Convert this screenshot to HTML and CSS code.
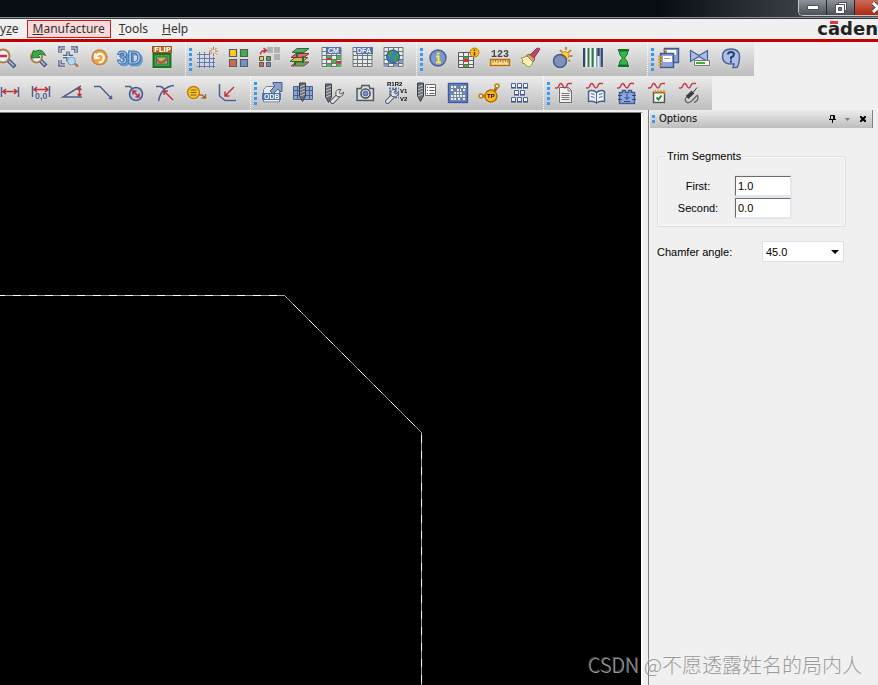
FILE: index.html
```html
<!DOCTYPE html>
<html lang="en">
<head>
    <meta charset="UTF-8">
    <meta name="viewport" content="width=device-width, initial-scale=1.0">
    <title>PCB Editor</title>
    <link rel="stylesheet" href="styles.css">
</head>
<body>
    <!-- shared icon parts -->
    <svg class="defs" aria-hidden="true">
        <symbol id="wave" viewBox="0 0 24 24">
            <path d="M3 7h2q1 0 2-2.500T9 2.500t2 2.500 2 2 2-2.500 2-2h3" fill="none" stroke="#c23b45" stroke-width="1.500"/>
        </symbol>
        <symbol id="drill" viewBox="0 0 24 24">
            <path d="M4.500 3h6v13l-3 5.500-3-5.500z" fill="#6b7078" stroke="#383c44"/>
            <path d="M5 7l5-2M5 10l5-2M5 13l5-2M5 16l5-2" fill="none" stroke="#c5c9d0"/>
        </symbol>
        <symbol id="wrench" viewBox="0 0 24 24">
            <path d="M11.500 20.500l6-6" fill="none" stroke="#555a63" stroke-width="5" stroke-linecap="round"/>
            <path d="M11.500 20.500l6-6" fill="none" stroke="#dfe2e6" stroke-width="3" stroke-linecap="round"/>
            <path d="M20 8.500q-4-1-5 2t1 5q4 1.500 6-1.500l.5-3-2.500 2-2-1.500z" fill="#dfe2e6" stroke="#555a63"/>
        </symbol>
        <symbol id="board" viewBox="0 0 24 24">
            <path d="M4 .5h19v19H4z" fill="#e9ebe9" stroke="#6d7478"/>
            <path d="M4 4.500h19M4 8.500h19M4 12.500h19M4 16.500h19M8.500 1v19M13.500 1v19M18.500 1v19" fill="none" stroke="#6d7478"/>
        </symbol>
    </svg>

    <header class="titlebar">
        <div class="window-buttons">
            <button type="button" aria-label="Minimize"><svg width="12" height="5"><path d="M.5.5h11v4H.5z" fill="#fff" stroke="#4a4e5c"/></svg></button>
            <button type="button" aria-label="Restore"><svg width="12" height="12"><path d="M3.500.5h8v8h-8z" fill="#fff" stroke="#4a4e5c"/><path d="M.5 2.500h9v9h-9z" fill="#fff" stroke="#4a4e5c"/><path d="M3.500 5.500h3v3h-3z" fill="#777b86" stroke="#4a4e5c"/></svg></button>
            <button type="button" class="close" aria-label="Close"><svg width="14" height="12"><path d="M2 1l10 9M12 1L2 10" stroke="#4a4e5c" stroke-width="5"/><path d="M2 1l10 9M12 1L2 10" stroke="#fff" stroke-width="3"/></svg></button>
        </div>
    </header>

    <nav class="menubar">
        <a href="#">y<u>z</u>e</a>
        <a href="#" class="active"><u>M</u>anufacture</a>
        <a href="#"><u>T</u>ools</a>
        <a href="#"><u>H</u>elp</a>
        <div class="logo">c<span>ā</span>den</div>
    </nav>

    <div class="toolbars">
        <div class="toolbar view-row">
            <div class="band">
                <button type="button" aria-label="Zoom out"><svg viewBox="0 0 24 24"><path d="M14 13l7 7" stroke="#455378" stroke-width="4.500"/><path d="M15 14l5 5" stroke="#9eafd6" stroke-width="2"/><circle cx="9" cy="9" r="6.500" fill="#eef1fa" stroke="#b37a4e" stroke-width="2"/><path d="M5 9h8" stroke="#c8313c" stroke-width="2.500"/></svg></button>
                <button type="button" aria-label="Zoom previous"><svg viewBox="0 0 24 24"><path d="M15 13l6 6" stroke="#455378" stroke-width="4.500"/><path d="M16 14l4 4" stroke="#9eafd6" stroke-width="2"/><circle cx="11.500" cy="10" r="5.500" fill="#e9eef9" stroke="#b37a4e" stroke-width="2"/><path d="M20.500 8.500Q18 2 12 3.500L10 5 8.500 3l-2 8 8.500-.5-2-2.500q3.500-2.500 7.500.5z" fill="#3aab42" stroke="#1f7428"/></svg></button>
                <button type="button" aria-label="Zoom fit"><svg viewBox="0 0 24 24"><path d="M4 6V1h5M15 1h5v5M4 13v5h5M7 9.500h10M12 4.500v10" stroke="#4c5f80" stroke-width="3.500"/><path d="M4 6V1h5M15 1h5v5M4 13v5h5M7 9.500h10M12 4.500v10" stroke="#e8edf3"/><path d="M18 16l4 3.500" stroke="#b9753d" stroke-width="2.500"/><circle cx="15.500" cy="14" r="4" fill="#b4d9f1" stroke="#6c9ac3"/></svg></button>
                <button type="button" aria-label="Redraw"><svg viewBox="0 0 24 24"><circle cx="12.500" cy="10.500" r="7.500" fill="#f5a541" stroke="#c88347" stroke-width="1.500"/><path d="M8 6.500v4.500h4.500M9 10q1.500-4 5-3t2.500 5-4.500 3" stroke="#fff" stroke-width="2"/></svg></button>
                <button type="button" aria-label="3D view"><svg viewBox="0 0 24 24"><text class="t3d" x="-1" y="17">3D</text></svg></button>
                <button type="button" aria-label="Flip design"><svg viewBox="0 0 24 24"><path d="M4.500 7h17v13h-17z" fill="#3ba743" stroke="#177522" stroke-width="2"/><path d="M7.500 10h11v7h-11z" fill="#a8c84d"/><path d="M8 12q2 5 6 3t4-5" stroke="#be533d" stroke-width="2.500"/><path d="M3.500-.5h19v6h-19z" fill="#c96b1e" stroke="#a24f12"/><text class="flip light" x="5" y="5">FLIP</text></svg></button>
            </div>
            <div class="band">
                <span class="grip"></span>
                <button type="button" aria-label="Grid"><svg viewBox="0 0 24 24"><path d="M5.500 5v16M10.500 5v16M15.500 5v16M19.500 10v11M3 7.500h13M3 11.500h18M3 15.500h18M3 19.500h18" stroke="#5e7ab8"/><path d="M19.500-.5v3M19.500 6v3M15 4h3M21 4h3M16.500 1l2 2M21 5.500l2 2M22.500 1l-2 2M18 5.500l-2 2" stroke="#c07a30"/></svg></button>
                <button type="button" aria-label="Color palette"><svg viewBox="0 0 24 24"><g stroke="#5a5a5a" stroke-width="1.200"><path d="M4.500 2.500h7v7h-7z" fill="#fdcb1c"/><path d="M15.500 2.500h7v7h-7z" fill="#40b044"/><path d="M4.500 12.500h7v7h-7z" fill="#cd6b51"/><path d="M15.500 12.500h7v7h-7z" fill="#7590ce"/></g></svg></button>
                <button type="button" aria-label="Swap colors"><svg viewBox="0 0 24 24"><g fill="#b0b0b0" stroke="none"><path d="M11 0h6v6h-6zM18 0h6v6h-6zM18 7h6v6h-6z"/></g><g stroke="#555"><path d="M3.500 9.500h4v4h-4z" fill="#fdcb1c"/><path d="M10.500 9.500h4v4h-4z" fill="#40b044"/><path d="M3.500 15.500h4v4h-4z" fill="#cd6b51"/><path d="M10.500 15.500h4v4h-4z" fill="#7590ce"/></g><path d="M4.500 7.500q0-4 5-4M7.500 1l3 2.500-3 2.500" stroke="#c8313c" stroke-width="1.500"/></svg></button>
                <button type="button" aria-label="Layers"><svg viewBox="0 0 24 24"><path d="M4 19l5-4h13l-5 4z" fill="#4faf63" stroke="#a12f35"/><path d="M3 14.500l5-4h13l-5 4z" fill="#e6b347" stroke="#286d3b"/><path d="M4 10.500l5-4h13l-5 4z" fill="#d66d6b" stroke="#8f2a2e"/><path d="M5 5.500l5-4h12l-5 4z" fill="#52a968" stroke="#286d3b"/><path d="M10 6v5M16 9v7M8 14v4" stroke="#28683c" stroke-width="2"/></svg></button>
                <button type="button" aria-label="Constraint manager"><svg viewBox="0 0 24 24"><use href="#board"/><path d="M9 9h4v3H9zM19 9h4v3h-4zM9 17h4v3H9zM19 17h4v3h-4zM14 13h4v3h-4z" fill="#42bd48" stroke="none"/><path d="M9 11h4v2H9zM19 14h4v2h-4z" fill="#f01c24" stroke="none"/><path d="M8 0h15v7H8z" fill="#5373ad" stroke="none"/><text class="tiny light" x="10" y="6">CM</text></svg></button>
                <button type="button" aria-label="DFA"><svg viewBox="0 0 24 24"><use href="#board"/><path d="M7 0h17v7H7z" fill="#5373ad" stroke="none"/><text class="tiny light" x="8" y="6">DFA</text></svg></button>
                <button type="button" aria-label="Global view"><svg viewBox="0 0 24 24"><use href="#board"/><path d="M4 17h4v3H4zM19 13h4v3h-4zM14 17h4v3h-4z" fill="#8598c7" stroke="none"/><circle cx="13" cy="9.500" r="6.500" fill="#3c7fb8" stroke="#264f83"/><path d="M8 7q3-4 5-3l-1 4-3 3zM14 9l4-3 1 5-4 4-2-3z" fill="#3f9b57" stroke="none"/></svg></button>
            </div>
            <div class="band">
                <span class="grip"></span>
                <button type="button" aria-label="Show element"><svg viewBox="0 0 24 24"><circle cx="13" cy="11" r="8" fill="#7e97d0" stroke="#4d608f" stroke-width="1.500"/><path d="M11 9.500h2.500V15M11 15.500h5" stroke="#f5ed3b" stroke-width="2"/><path d="M12 5.500h2.500v2H12z" fill="#f5ed3b" stroke="none"/></svg></button>
                <button type="button" aria-label="Constraint info"><svg viewBox="0 0 24 24"><path d="M2.500 5.500h15v15h-15z" fill="#ececec" stroke="#555"/><path d="M3 9.500h14M3 13.500h14M3 17.500h14M7.500 6v14M12.500 6v14" stroke="#666"/><path d="M8 10h4v3H8zM8 18h4v2H8z" fill="#40b044" stroke="none"/><path d="M8 12h4v3H8z" fill="#e32d2d" stroke="none"/><circle cx="18.500" cy="5.500" r="4.500" fill="#fcbc13" stroke="#b87908"/><path d="M18.500 2.500v1.500M18.500 5v3.500" stroke="#4b3a0b" stroke-width="1.500"/></svg></button>
                <button type="button" aria-label="Measure"><svg viewBox="0 0 24 24"><text class="num" x="4" y="10">123</text><path d="M3.500 12.500h19v6h-19z" fill="#fddf9a" stroke="#b96e13" stroke-width="1.500"/><path d="M6 13v3M8.500 13v2M11 13v3M13.500 13v2M16 13v3M18.500 13v2M21 13v3" stroke="#b96e13"/></svg></button>
                <button type="button" aria-label="Highlight"><svg viewBox="0 0 24 24"><path d="M22 2l-6 9-4-3 6-6 2-1z" fill="#c2466a" stroke="#8b2e4a"/><path d="M11 7l6 5-2 3-7-6z" fill="#d8a56d" stroke="#875737"/><path d="M9 9l6 6q-1 4-4 5l-3-1-1-2-3-1 1-3-2-2q3-.5 6-2z" fill="#fbf1b0" stroke="#9a8b55"/></svg></button>
                <button type="button" aria-label="Shadow mode"><svg viewBox="0 0 24 24"><path d="M17 0v3M23.500 9H20M11 3l2 2M22 3l-2.500 2.500M21 14.500L19.500 13" stroke="#bd6b18" stroke-width="1.500"/><circle cx="16" cy="8.500" r="4" fill="#fbd42c" stroke="#cf8a1d"/><circle cx="11" cy="14" r="6.500" fill="#7f91b9" stroke="#485c85" stroke-width="1.500"/></svg></button>
                <button type="button" aria-label="Dim bars"><svg viewBox="0 0 24 24"><path d="M3 1h20v19H3z" fill="#8798b7" stroke="none"/><path d="M4 1v19M18.500 1v8" stroke="#344367" stroke-width="2"/><path d="M6.500 1v19M10.500 1v19M15 1v19" stroke="#f2f6f2" stroke-width="2"/><path d="M8.500 1v19M12.500 1v19" stroke="#25803a" stroke-width="1.500"/><path d="M18.500 9v11" stroke="#e3e8ef" stroke-width="2"/><path d="M22 1v19" stroke="#42527a" stroke-width="2"/></svg></button>
                <button type="button" aria-label="Timing"><svg viewBox="0 0 24 24"><path d="M7 3h11M7 19h11" stroke="#137324" stroke-width="2"/><path d="M8 4h9q0 4-3.500 7 3.500 3 3.500 7H8q0-4 3.500-7Q8 8 8 4z" fill="#35b54a" stroke="#137324"/></svg></button>
            </div>
            <div class="band">
                <span class="grip"></span>
                <button type="button" aria-label="Reports"><svg viewBox="0 0 24 24"><path d="M8.500 1.500h14v14h-14z" fill="#90a4d8" stroke="#41598f" stroke-width="1.500"/><path d="M11 3h9v5h-9z" fill="#fff" stroke="none"/><path d="M4.500 6.500h13v14h-13z" fill="#90a4d8" stroke="#41598f" stroke-width="1.500"/><path d="M7 9h9v6H7z" fill="#fff" stroke="none"/><path d="M8 11.500h6" stroke="#aaa"/><path d="M2 9.500h4M2 12.500h4M2 15.500h4M2 18.500h4M7 3.500h4" stroke="#dfa018" stroke-width="1.500"/></svg></button>
                <button type="button" aria-label="Update DRC"><svg viewBox="0 0 24 24"><path d="M3.500 3.500l8.500 5 8.500-5v11l-8.500-5-8.500 5z" fill="#a9bee9" stroke="#445e97" stroke-width="1.200"/><path d="M7.500 13.500h15v5h-15z" fill="#f5f5f5" stroke="#777"/><path d="M9 16h9" stroke="#3fae34" stroke-width="2"/></svg></button>
                <button type="button" aria-label="Help"><svg viewBox="0 0 24 24"><path d="M13 2q8.500 0 8.500 7.500 0 7-2.500 11h-4l1-3.500Q4.500 18 4.500 9.500 4.500 2 13 2z" fill="#adbfe9" stroke="#4d628f" stroke-width="1.500"/><path d="M10 7.500q0-2.500 3-2.500t3 2.500q0 1.500-3 3v2M13 13.500v2" stroke="#263c74" stroke-width="2"/></svg></button>
            </div>
        </div>

        <div class="toolbar dimension-row">
            <div class="band">
                <button type="button" aria-label="Linear dimension"><svg viewBox="0 0 24 24"><path d="M4.500 6v10M21.500 6v10" stroke-width="1.500"/><path d="M6 10.500h14M9 8l-3 2.500 3 2.500M17 8l3 2.500-3 2.500" class="red"/></svg></button>
                <button type="button" aria-label="Datum dimension"><svg viewBox="0 0 24 24"><path d="M4.500 5v11M21.500 5v11" stroke-width="1.500"/><path d="M6 8.500h14M9 6L6 8.500 9 11M17 6l3 2.500-3 2.500" class="red"/><text class="coord" x="7" y="18">0,0</text></svg></button>
                <button type="button" aria-label="Angular dimension"><svg viewBox="0 0 24 24"><path d="M22.500 16H4L22 5M20.500 16h2.500" stroke-width="1.500"/><path d="M20.500 7v8M18.500 9l2-2 2 2M18.500 13l2 2 2-2" class="red"/></svg></button>
                <button type="button" aria-label="Leader"><svg viewBox="0 0 24 24"><path d="M4 5.500h6l11 11.500" stroke-width="1.500"/><path d="M22.500 18.500l-4.500-.5 4-4z" fill="#4b5f8f" stroke="none"/></svg></button>
                <button type="button" aria-label="Diametral leader"><svg viewBox="0 0 24 24"><path d="M4 5.500h5l3 3" stroke-width="1.500"/><circle cx="15" cy="13" r="6.500" fill="#bcc9e2" stroke-width="1.700"/><path d="M12.500 10.500l5 5M12 13.500V10h3.500M18 12.500V16h-3.500" class="red"/></svg></button>
                <button type="button" aria-label="Radial leader"><svg viewBox="0 0 24 24"><path d="M4 5.500h5l4 3M22 4.500Q9 6 6.500 20" stroke-width="1.700"/><path d="M21 19L12 10M12 14v-4h4" class="red"/></svg></button>
                <button type="button" aria-label="Balloon leader"><svg viewBox="0 0 24 24"><path d="M14 14h5l3 2.500M22.500 13v4h-4" stroke="#9a6636" stroke-width="1.500"/><circle cx="10.500" cy="11.500" r="6" fill="#fdc72b" stroke="#c07d12" stroke-width="1.500"/><path d="M7.500 9h6M7.500 11.500h6M7.500 14h6" stroke="#805a0a"/></svg></button>
                <button type="button" aria-label="Chamfer leader"><svg viewBox="0 0 24 24"><path d="M5.500 3v12l5.500 4.500h11" stroke-width="1.500"/><path d="M20 6l-9 9M11 10.500V15h4.500" class="red"/></svg></button>
            </div>
            <div class="band">
                <span class="grip"></span>
                <button type="button" aria-label="Export ODB"><svg viewBox="0 0 24 24"><path d="M4.500 11V8.500l3-3h8l5 3V21h-16z" fill="#e9ebee" stroke="#777e89"/><path d="M14 3V1.500h9v9h-2L19 8l-5 5-3-3 5-5z" fill="#8ba0ca" stroke="#445b8c"/><path d="M3 12h19v7H3z" fill="#4b70b5" stroke="none"/><text class="tiny light" x="5" y="18">ODB</text></svg></button>
                <button type="button" aria-label="NC drill"><svg viewBox="0 0 24 24"><path d="M3.500 5.500h19v13h-19z" fill="#8ea4cc" stroke="#48608f"/><path d="M3 9.500h20M3 14.500h20M7.500 6v12M19.500 6v12" stroke="#48608f"/><use href="#drill" x="5" y="-1"/></svg></button>
                <button type="button" aria-label="Drill customization"><svg viewBox="0 0 24 24"><use href="#drill"/><use href="#wrench"/></svg></button>
                <button type="button" aria-label="Artwork"><svg viewBox="0 0 24 24"><path d="M5 7.500h4l1-3h7l1 3h3.500v12H5z" fill="#d9dcdf" stroke="#51565f" stroke-width="1.500"/><circle cx="13.500" cy="12.500" r="4.500" fill="#eef2fa" stroke="#444a56" stroke-width="1.500"/><circle cx="13.500" cy="12.500" r="2.500" fill="#738fc4"/></svg></button>
                <button type="button" aria-label="Auto rename"><svg viewBox="0 0 24 24"><path d="M6 7.500h10M6 10.500h10M6 13.500h10M6 16.500h10" stroke="#5877b9" stroke-width="2" stroke-dasharray="2 1"/><use href="#wrench" x="-7"/><text class="ref" x="4" y="5">R1R2</text><text class="ref" x="17" y="12">V1</text><text class="ref" x="17" y="20">V2</text></svg></button>
                <button type="button" aria-label="Drill legend"><svg viewBox="0 0 24 24"><use href="#drill" x="-1" y="-1"/><path d="M11.500 3.500h10v11h-10z" fill="#fff" stroke="#666"/><path d="M13 6.500h1M15.500 6.500h5M13 9.500h1M15.500 9.500h5M13 12.500h1M15.500 12.500h5" stroke="#555"/></svg></button>
                <button type="button" aria-label="Thieving"><svg viewBox="0 0 24 24"><path d="M3.500 2.500h19v19h-19z" fill="#6985c1" stroke="#3f5b98" stroke-width="1.500"/><path d="M6 6h5M16 6h5M6 9h2M12 9h4M18 9h2M9 12h8M6 15h14M6 18h5M13 18h2M18 18h2" stroke="#fff4c8" stroke-width="2" stroke-dasharray="2 1"/></svg></button>
                <button type="button" aria-label="Testprep"><svg viewBox="0 0 24 24"><path d="M5 15h6M18 11l3-5" stroke="#b36d0a" stroke-width="3"/><circle cx="5" cy="15" r="2" fill="#eee" stroke="#c17e13" stroke-width="1.500"/><circle cx="21" cy="5" r="2" fill="#eee" stroke="#c17e13" stroke-width="1.500"/><circle cx="15" cy="15" r="6" fill="#fcb91d" stroke="#b36d0a" stroke-width="1.500"/><text class="ref" x="11" y="17">TP</text></svg></button>
                <button type="button" aria-label="Silkscreen"><svg viewBox="0 0 24 24"><path d="M4.500 2.500h4v4h-4zM10.500 2.500h4v4h-4zM16.500 2.500h4v4h-4zM7.500 9.500h4v4h-4zM13.500 9.500h4v4h-4zM4.500 16.500h4v4h-4zM10.500 16.500h4v4h-4zM16.500 16.500h4v4h-4z" fill="#f3f6ff" stroke="#47629d"/><path d="M4 7h5M10 7h5M16 7h5M7 14h5M13 14h5M4 21h5M10 21h5M16 21h5" stroke="#333f60"/></svg></button>
            </div>
            <div class="band">
                <span class="grip"></span>
                <button type="button" aria-label="Signal report"><svg viewBox="0 0 24 24"><path d="M7.500 6.500h9l3 3v12h-12z" fill="#f2f2f2" stroke="#6a6a6a"/><path d="M16 6v4h4M9.500 12.500h8M9.500 14.500h8M9.500 16.500h8M9.500 18.500h8" stroke="#777"/><use href="#wave"/></svg></button>
                <button type="button" aria-label="Signal library"><svg viewBox="0 0 24 24"><path d="M5.500 10.500l2-1q4-.5 6 2 2-2.500 6-2l2 1v10q-5-1-8 1.500-3-2.500-8-1.500z" fill="#eef1fa" stroke="#46608d" stroke-width="1.500"/><path d="M13.500 12v9M8 12.500l3.500 1M8 15.500l3.500 1M16 13.500l3.500-1M16 16.500l3.500-1" stroke="#516995"/><use href="#wave"/></svg></button>
                <button type="button" aria-label="Model assignment"><svg viewBox="0 0 24 24"><path d="M5.500 11.500h3v-2h3v2h3v-2h3v2h3v11h-15z" fill="#8da7dd" stroke="#3f5c99" stroke-width="1.500"/><path d="M4 14.500h4M4 18.500h4M18 14.500h4M18 18.500h4M13 13v5M10.500 16l2.500 2.500 2.500-2.500M10 20.500h6" stroke="#2d467d"/><use href="#wave"/></svg></button>
                <button type="button" aria-label="Signal audit"><svg viewBox="0 0 24 24"><path d="M8.500 11.500h11v10h-11z" fill="#fafafa" stroke="#555" stroke-width="1.500"/><path d="M10 9v4M13 9v4M16 9v4M19 9v4" stroke="#d99a13" stroke-width="1.500"/><path d="M11.500 16.500l2 2 3-4" stroke="#23893a" stroke-width="2"/><use href="#wave"/></svg></button>
                <button type="button" aria-label="Signal probe"><svg viewBox="0 0 24 24"><path d="M21 6.500l-4 5" stroke="#333"/><path d="M17 11l-6 5.500" stroke="#3b3e43" stroke-width="4"/><path d="M11 16q-3 2-1 4.500t5 0 5-5 2 1-4 5" stroke="#666b73" stroke-width="1.500"/><use href="#wave"/></svg></button>
            </div>
        </div>
    </div>

    <main class="workspace">
        <div class="canvas">
            <svg shape-rendering="crispEdges">
                <g class="outline">
                    <path d="M0 182.500h285M285 183l136 136M421.500 319v2000"/>
                </g>
                <g class="outline-dash">
                    <path d="M-3 182.500h288" stroke-dasharray="8 8"/>
                    <path d="M293 191l128 128" stroke-dasharray="11 12"/>
                    <path d="M421.500 322v2000" stroke-dasharray="8 8"/>
                </g>
            </svg>
        </div>

        <aside class="panel">
            <div class="panel-title">
                <span class="grip"></span>
                <h2>Options</h2>
                <button type="button" aria-label="Pin"><svg width="7" height="8"><path d="M1.500 4V.5h4V4M4.500 1v3M0 4.500h7M3.500 5v3" stroke="#000"/></svg></button>
                <button type="button" aria-label="Panel menu"><svg width="5" height="3"><path d="M0 0h5L2.500 3z" fill="#777"/></svg></button>
                <button type="button" aria-label="Close panel"><svg width="6" height="6"><path d="M0 0l6 6M6 0L0 6" stroke="#000" stroke-width="2"/></svg></button>
            </div>
            <form class="options">
                <fieldset>
                    <legend>Trim Segments</legend>
                    <div class="field">
                        <label for="first">First:</label>
                        <input type="text" id="first" value="1.0">
                    </div>
                    <div class="field">
                        <label for="second">Second:</label>
                        <input type="text" id="second" value="0.0">
                    </div>
                </fieldset>
                <div class="angle">
                    <label for="angle">Chamfer angle:</label>
                    <div class="combo">
                        <select id="angle">
                            <option>45.0</option>
                        </select>
                    </div>
                </div>
            </form>
        </aside>
    </main>

    <div class="watermark">CSDN @不愿透露姓名的局内人</div>
</body>
</html>
```
FILE: styles.css
```css
* {
    box-sizing: border-box;
}

body {
    margin: 0;
    height: 100vh;
    display: flex;
    flex-direction: column;
    overflow: hidden;
    position: relative;
    background: #f0f0f0;
    color: #000;
    font-family: "Liberation Sans", Arial, sans-serif;
    font-size: 11px;
}

button {
    padding: 0;
    border: none;
    background: none;
}

.defs {
    position: absolute;
    width: 0;
    height: 0;
}

/* title bar */
.titlebar {
    flex: none;
    height: 19px;
    display: flex;
    justify-content: flex-end;
    background: linear-gradient(90deg, #080d14 0%, #080d14 75%, #3a3f45 91%, #50555b 100%);
    border-bottom: 1px solid #33373c;
    box-shadow: inset 0 -1px #8c9298;
}

.window-buttons {
    display: flex;
    width: 80px;
    height: 16px;
    overflow: hidden;
    border: 1px solid #c5c8cc;
    border-width: 0 0 1px 1px;
    border-bottom-left-radius: 5px;
}

.window-buttons button {
    flex: none;
    width: 28px;
    display: flex;
    justify-content: center;
    align-items: center;
    border-right: 1px solid #22262c;
    background: linear-gradient(#8f9399, #4b4f56);
}

.window-buttons .close {
    width: 46px;
    background: linear-gradient(#c96a55, #b02a12);
}

/* menu */
.menubar {
    flex: none;
    height: 23px;
    display: flex;
    align-items: center;
    gap: 2px;
    overflow: hidden;
    border-bottom: 3px solid #c40000;
    font-family: "Noto Sans", sans-serif;
    font-size: 12px;
}

.menubar a {
    padding: 0 5px;
    border: 1px solid transparent;
    line-height: 16px;
    color: #333;
    text-decoration: none;
}

.menubar a:first-child {
    padding-left: 0;
    border-left: none;
}

.menubar a.active {
    background: #f9d9d9;
    border-color: #c81e1e;
}

.logo {
    margin-left: auto;
    font-family: "DejaVu Sans", sans-serif;
    font-size: 18px;
    font-weight: bold;
    line-height: 20px;
    color: #222;
}

.logo span {
    position: relative;
}

.logo span::after {
    content: "";
    position: absolute;
    left: 2px;
    right: 2px;
    top: 3px;
    height: 3px;
    background: #e03a3e;
}

/* toolbars */
.toolbars {
    flex: none;
    display: flex;
    flex-direction: column;
    align-items: flex-start;
}

.toolbar {
    display: flex;
    background: linear-gradient(#ececec, #bdbdbd);
}

.view-row {
    margin-left: -9px;
}

.dimension-row {
    margin-left: -6px;
}

.band {
    display: flex;
    align-items: center;
    gap: 1px;
    height: 34px;
    padding-right: 9px;
}

.band + .band {
    border-left: 1px dotted #fff;
    padding-left: 3px;
}

.grip {
    flex: none;
    width: 3px;
    background: repeating-linear-gradient(#3399ff 0 3px, transparent 3px 5px);
}

.band .grip {
    height: 23px;
    margin-right: -2px;
}

.band button {
    flex: none;
    width: 30px;
    height: 30px;
    display: flex;
    align-items: center;
    justify-content: center;
}

.band svg {
    width: 24px;
    height: 24px;
    overflow: visible;
    fill: none;
    stroke: #4b5f8f;
    filter: drop-shadow(0 0 1px #e4e4e4);
}

.band svg .red {
    stroke: #c22f38;
    stroke-width: 1.5px;
}

.band text {
    stroke: none;
    fill: #222;
    font-family: "Liberation Sans", sans-serif;
    font-weight: bold;
}

.band .tiny {
    font-size: 7px;
}

.band .flip {
    font-family: "DejaVu Sans", sans-serif;
    font-size: 7px;
}

.band .light {
    fill: #fff;
}

.band .num {
    font-family: "Liberation Mono", monospace;
    font-size: 10px;
    fill: #444;
}

.band .coord {
    font-size: 9px;
    fill: #4b5f8f;
}

.band .ref {
    font-size: 6px;
    fill: #000;
}

.band .t3d {
    font-size: 19px;
    fill: #a6c9ed;
    stroke: #3e6da8;
    filter: drop-shadow(2px 2px 0 #6a97cc);
}

/* drawing area and side panel */
.workspace {
    flex: 1;
    min-height: 0;
    display: flex;
}

.canvas {
    flex: 1;
    margin-top: 2px;
    border-top: 1px solid #808080;
    border-right: 2px solid #fff;
    background: #000;
}

.canvas svg {
    display: block;
    width: 100%;
    height: 100%;
    fill: none;
}

.outline {
    stroke: #a0a0a0;
}

.outline-dash {
    stroke: #fff;
}

.panel {
    width: 230px;
    margin-left: 5px;
    border-left: 1px solid #808080;
}

.panel-title {
    display: flex;
    align-items: center;
    height: 18px;
    margin: 0 5px 0 1px;
    padding: 0 2px;
    background: linear-gradient(#ececec, #bdbdbd);
    border-right: 1px solid #808080;
}

.panel-title .grip {
    height: 8px;
}

.panel-title h2 {
    flex: 1;
    margin: 0 0 0 4px;
    font-family: "DejaVu Sans Condensed", "Noto Sans", sans-serif;
    font-size: 11px;
    font-weight: normal;
    line-height: 16px;
}

.panel-title button {
    display: flex;
    justify-content: center;
    align-items: center;
    width: 15px;
    height: 16px;
}

.panel-title svg {
    fill: none;
}

.options {
    padding: 21px 32px 0 8px;
}

fieldset {
    margin: 0;
    padding: 12px 0 7px 19px;
    border: 1px solid #d5dfe5;
    border-radius: 3px;
    box-shadow: inset 0 0 0 1px #fafafa;
}

legend {
    margin-left: -12px;
    padding: 0 2px;
    line-height: 14px;
}

.field {
    display: flex;
    align-items: center;
}

.field label {
    width: 42px;
    margin-right: 15px;
    text-align: center;
}

.field input {
    width: 58px;
    height: 22px;
    padding: 0 2px;
    border: 2px solid;
    border-color: #6b6b6b #e3e8ee #e3e8ee #6b6b6b;
    outline: 1px solid #e3e8ee;
    outline-offset: -1px;
    background: #fff;
    font: inherit;
}

.angle {
    display: flex;
    align-items: center;
    justify-content: space-between;
    margin: 14px 2px 0 0;
}

.combo {
    position: relative;
    width: 82px;
}

.combo select {
    display: block;
    width: 100%;
    height: 21px;
    padding: 0 3px;
    appearance: none;
    border: 1px solid #dbe0e8;
    border-radius: 0;
    background: #fff;
    color: #000;
    font: inherit;
}

.combo::after {
    content: "";
    position: absolute;
    right: 5px;
    top: 9px;
    border: 4px solid transparent;
    border-top-color: #000;
    border-bottom: none;
    pointer-events: none;
}

.watermark {
    position: absolute;
    right: 16px;
    bottom: 6px;
    font-family: "Noto Sans CJK SC", sans-serif;
    font-size: 20px;
    font-weight: 300;
    line-height: 28px;
    color: #999;
    text-shadow: -1px -1px rgba(255, 255, 255, 0.3);
}
```
